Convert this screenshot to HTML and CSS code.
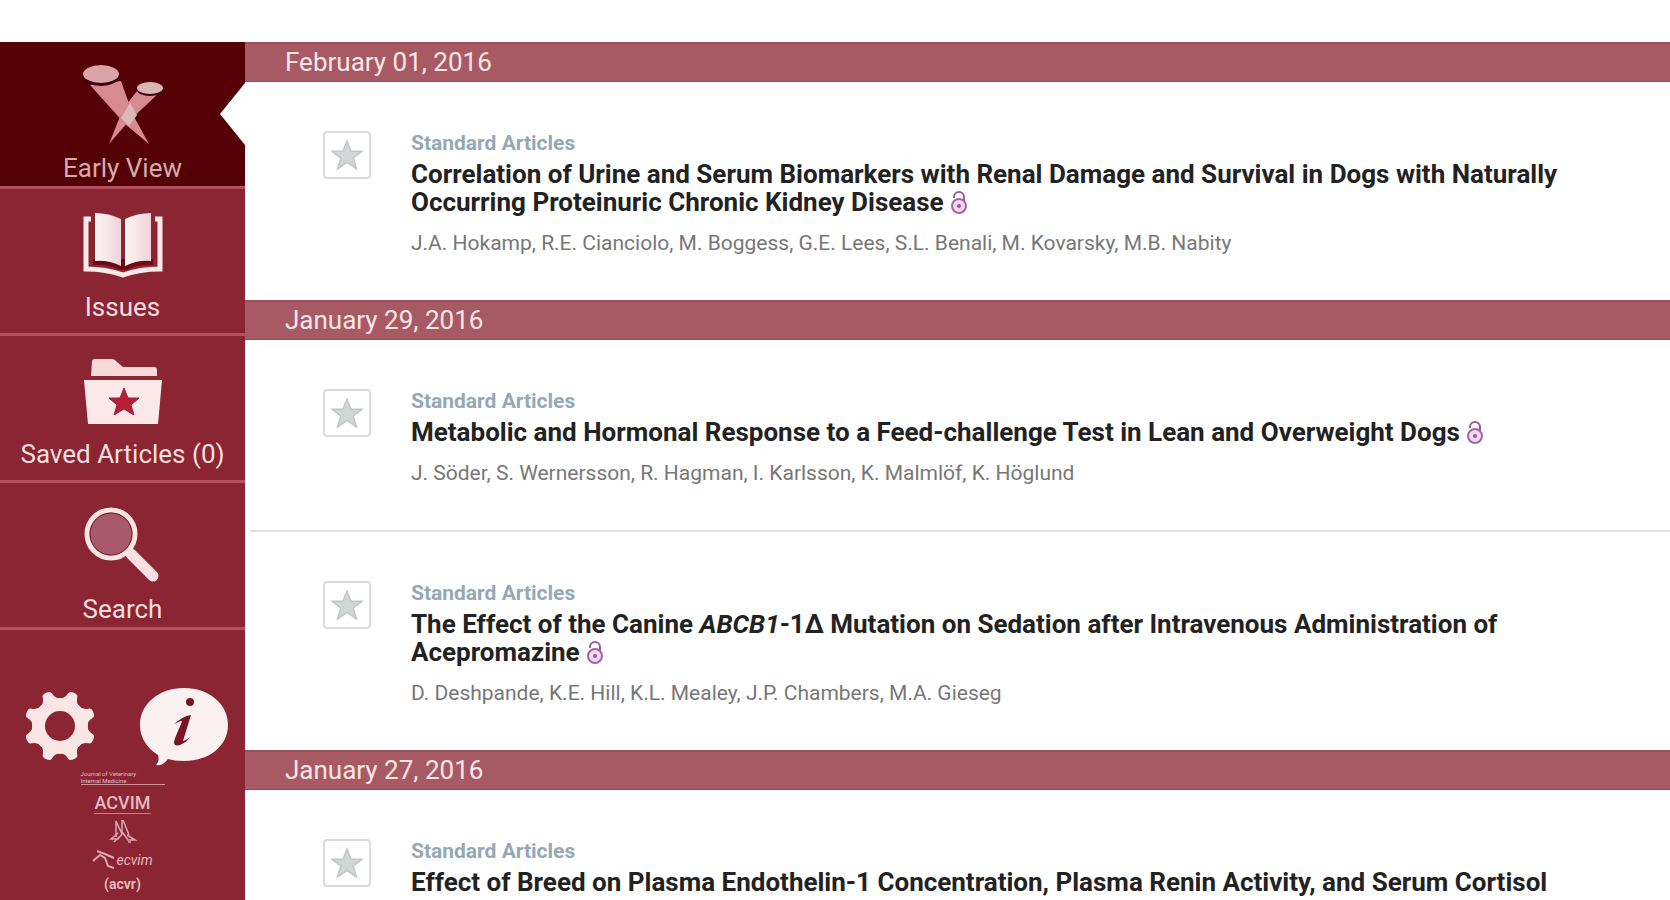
FILE: index.html
```html
<!DOCTYPE html>
<html lang="en">
<head>
  <meta charset="UTF-8">
  <meta name="viewport" content="width=device-width, initial-scale=1">
  <title>Early View</title>
  <link rel="stylesheet" href="styles.css">
</head>
<body>

  <!-- Shared icons -->
  <svg class="sprite" aria-hidden="true">
    <symbol id="star" viewBox="0 0 32 30">
      <path d="M16 1l4 10.200h11l-8.800 6.800 3.300 11-9.500-6.500L6.500 29l3.300-11L1 11.200h11z" fill="#d3d6d7" stroke="#c2c6c7" stroke-width="1.500"/>
    </symbol>
    <symbol id="open-access" viewBox="0 0 18 24">
      <path d="M4 7V6a5 5 0 0 1 10 0v8" fill="none" stroke="#9a5a9a" stroke-width="2"/>
      <circle cx="9" cy="15" r="7" fill="#f3d8f3" stroke="#a565a5" stroke-width="2"/>
      <circle cx="9" cy="15" r="2" fill="#9a5a9a"/>
    </symbol>
  </svg>

  <div class="app">
    <aside class="sidebar">
      <nav class="menu">
        <a href="#" class="menu-item active">
          <svg class="tall" viewBox="0 0 80 80">
            <path d="M7 20l35 39 24 20-16-29-12-34z" fill="#d98a90"/>
            <path d="M54 26l-14 18-14 35 19-22 31-29z" fill="#d98a90"/>
            <path d="M47 38l7 12-8 11-8-8z" fill="#dcb9b9"/>
            <ellipse cx="18" cy="12" rx="18" ry="9" fill="#35000a"/>
            <ellipse cx="67" cy="25" rx="13" ry="6" fill="#35000a"/>
            <ellipse cx="18" cy="9" rx="18" ry="9" fill="#dba5a8"/>
            <ellipse cx="67" cy="23" rx="13" ry="6" fill="#dbb5b3"/>
          </svg>
          <span>Early View</span>
        </a>
        <a href="#" class="menu-item">
          <svg viewBox="0 0 80 72">
            <defs>
              <linearGradient id="page">
                <stop offset="0" stop-color="#fff4f4"/>
                <stop offset="1" stop-color="#efd3d8"/>
              </linearGradient>
            </defs>
            <path d="M8 7H3v50q20 0 37 6 17-6 37-6V7h-5" fill="none" stroke="#fbe9e6" stroke-width="5"/>
            <path d="M10 53q15-1 27 5h6q12-6 27-5v-6H10z" fill="#6f0714"/>
            <path d="M12 1q14 0 26 6v47q-12-6-26-5z" fill="url(#page)"/>
            <path d="M68 1q-14 0-26 6v47q12-6 26-5z" fill="url(#page)"/>
          </svg>
          <span>Issues</span>
        </a>
        <a href="#" class="menu-item">
          <svg viewBox="0 0 80 72">
            <path d="M8 17L9 3q0-3 3-3h17q3 0 5 3l6 5h31q3 0 3 3v6z" fill="#f8d9da"/>
            <path d="M1 21h78l-4 44H5z" fill="#fbe8e9"/>
            <path d="M41 29l4 10h11l-8 7 3 10-10-6-10 6 3-10-8-7h11z" fill="#b81f36" stroke="#8b2a40"/>
          </svg>
          <span>Saved Articles (0)</span>
        </a>
        <a href="#" class="menu-item">
          <svg class="tall" viewBox="0 0 80 80">
            <path d="M48 48l22 22" stroke="#fbdfe1" stroke-width="11" stroke-linecap="round"/>
            <circle cx="28" cy="28" r="24" fill="#a9596c" stroke="#fbe6e0" stroke-width="5"/>
            <circle cx="28" cy="28" r="21" fill="none" stroke="#7b1a2b"/>
          </svg>
          <span>Search</span>
        </a>
      </nav>

      <div class="tools">
        <button class="settings" aria-label="Settings">
          <svg viewBox="-36 -36 72 72">
            <g fill="#fbe6e6" transform="rotate(22.500)">
              <circle r="28"/>
              <path id="cog" d="M-11-25q5-2 6-8 0-3 5-3t5 3q1 6 6 8z"/>
              <use href="#cog" transform="rotate(45)"/>
              <use href="#cog" transform="rotate(90)"/>
              <use href="#cog" transform="rotate(135)"/>
              <use href="#cog" transform="rotate(180)"/>
              <use href="#cog" transform="rotate(225)"/>
              <use href="#cog" transform="rotate(270)"/>
              <use href="#cog" transform="rotate(315)"/>
            </g>
            <circle r="15" fill="#8b2533"/>
          </svg>
        </button>
        <button class="info" aria-label="Information">
          <svg viewBox="0 0 90 80">
            <path d="M45 2c25 0 44 16 44 37S70 75 45 75c-7 0-12-1-16-2-4 5-8 7-12 6 3-3 3-7 2-10C8 62 1 52 1 39 1 18 20 2 45 2z" fill="#fbf1f1"/>
            <circle cx="51" cy="16" r="4" fill="#7b1524"/>
            <path d="M35 38c5-4 10-8 17-9l-8 26c4-1 6-3 8-5-4 7-16 13-17 7 0-5 6-15 8-22-3 0-5 2-8 3z" fill="#7b1524"/>
          </svg>
        </button>
      </div>

      <div class="sponsors">
        <p class="journal">Journal of Veterinary<br>Internal Medicine</p>
        <p class="acvim">ACVIM</p>
        <svg class="mark" viewBox="0 0 28 26">
          <path d="M7 19V3l6 13V2m1 0l6 15M9 15l-7 6h7l5-6 5 7h7l-8-5M5 24l5-5m9 5h3" fill="none" stroke="#dba8ae" stroke-width="1.500"/>
        </svg>
        <div class="ecvim">
          <svg viewBox="0 0 24 20">
            <path d="M1 11l7-6 5 3 3 8 6 2M5 1l8 3 9 4" fill="none" stroke="#dba8ae" stroke-width="2"/>
          </svg>
          <span>ecvim</span>
        </div>
        <p class="acvr">(acvr)</p>
      </div>
    </aside>

    <main class="list">
      <section>
        <h2>February 01, 2016</h2>
        <article>
          <button class="save" aria-label="Save article"><svg><use href="#star"/></svg></button>
          <div class="details">
            <p class="category">Standard Articles</p>
            <h3><a href="#">Correlation of Urine and Serum Biomarkers with Renal Damage and Survival in Dogs with Naturally Occurring Proteinuric Chronic Kidney Disease</a><svg><use href="#open-access"/></svg></h3>
            <p class="authors">J.A. Hokamp, R.E. Cianciolo, M. Boggess, G.E. Lees, S.L. Benali, M. Kovarsky, M.B. Nabity</p>
          </div>
        </article>
      </section>

      <section>
        <h2>January 29, 2016</h2>
        <article>
          <button class="save" aria-label="Save article"><svg><use href="#star"/></svg></button>
          <div class="details">
            <p class="category">Standard Articles</p>
            <h3><a href="#">Metabolic and Hormonal Response to a Feed-challenge Test in Lean and Overweight Dogs</a><svg><use href="#open-access"/></svg></h3>
            <p class="authors">J. Söder, S. Wernersson, R. Hagman, I. Karlsson, K. Malmlöf, K. Höglund</p>
          </div>
        </article>
        <hr>
        <article>
          <button class="save" aria-label="Save article"><svg><use href="#star"/></svg></button>
          <div class="details">
            <p class="category">Standard Articles</p>
            <h3><a href="#">The Effect of the Canine <em>ABCB1</em>-1Δ Mutation on Sedation after Intravenous Administration of Acepromazine</a><svg><use href="#open-access"/></svg></h3>
            <p class="authors">D. Deshpande, K.E. Hill, K.L. Mealey, J.P. Chambers, M.A. Gieseg</p>
          </div>
        </article>
      </section>

      <section>
        <h2>January 27, 2016</h2>
        <article>
          <button class="save" aria-label="Save article"><svg><use href="#star"/></svg></button>
          <div class="details">
            <p class="category">Standard Articles</p>
            <h3><a href="#">Effect of Breed on Plasma Endothelin-1 Concentration, Plasma Renin Activity, and Serum Cortisol</a></h3>
          </div>
        </article>
      </section>
    </main>
  </div>

</body>
</html>
```
FILE: styles.css
```css
* {
  box-sizing: border-box;
}

body {
  margin: 0;
  font-family: Roboto, sans-serif;
  background: #fff;
  overflow: hidden;
}

h2, h3, p {
  margin: 0;
}

a {
  color: inherit;
  text-decoration: none;
}

button {
  padding: 0;
  border: none;
  background: none;
  cursor: pointer;
}

.sprite {
  display: none;
}

.app {
  display: flex;
  height: 100vh;
  padding-top: 42px;
}

/* Sidebar */
.sidebar {
  flex: 0 0 245px;
  background: #8b2533;
}

.menu-item {
  display: flex;
  flex-direction: column;
  align-items: center;
  position: relative;
  height: 147px;
  padding-top: 23px;
  border-bottom: 3px solid #b44f5f;
  color: #f7dfdf;
  font-size: 26px;
  line-height: 46px;
}

.menu-item svg {
  flex: none;
  width: 80px;
  height: 72px;
}

.menu-item svg.tall {
  height: 80px;
}

.menu-item.active {
  background: #540006;
  color: #d3acab;
}

.menu-item.active::after {
  content: "";
  position: absolute;
  top: 41px;
  right: 0;
  border: 31px solid transparent;
  border-left: none;
  border-right: 25px solid #fff;
}

.tools {
  display: flex;
  justify-content: space-between;
  align-items: center;
  padding: 56px 16px 0 24px;
}

.tools svg {
  display: block;
}

.settings svg {
  width: 72px;
  height: 72px;
}

.info svg {
  width: 90px;
  height: 80px;
}

.sponsors {
  display: flex;
  flex-direction: column;
  align-items: center;
  color: #e5b9be;
}

.journal {
  width: 84px;
  padding-top: 4px;
  border-bottom: 1px solid #d3949c;
  font-size: 6px;
  line-height: 7px;
}

.acvim {
  margin-top: 8px;
  border-bottom: 1px solid #c98089;
  font-size: 18px;
  font-weight: 500;
  line-height: 20px;
}

.mark {
  width: 28px;
  height: 26px;
  margin-top: 4px;
}

.ecvim {
  display: flex;
  align-items: center;
  margin-top: 4px;
  font-size: 14px;
  font-style: italic;
  line-height: 24px;
}

.ecvim svg {
  width: 24px;
  height: 20px;
}

.acvr {
  font-size: 14px;
  font-weight: 700;
  line-height: 24px;
}

/* Article list */
.list {
  flex: 1;
  min-width: 0;
  overflow: hidden;
}

.list h2 {
  height: 40px;
  padding-left: 40px;
  background: #a75a64;
  border-top: 2px solid #9c4e5c;
  border-bottom: 1px solid #9c4755;
  color: #fae6e6;
  font-size: 26px;
  font-weight: 400;
  line-height: 37px;
}

article {
  display: flex;
  gap: 40px;
  padding: 46px 80px 45px 78px;
}

hr {
  height: 2px;
  margin: 0 0 0 5px;
  border: none;
  background: #dfe2e4;
}

.save {
  display: flex;
  flex: none;
  align-items: center;
  justify-content: center;
  width: 48px;
  height: 48px;
  margin-top: 3px;
  border: 2px solid #dcdcdc;
  border-radius: 4px;
}

.save svg {
  width: 32px;
  height: 30px;
}

.category {
  color: #94a9b5;
  font-size: 21px;
  font-weight: 700;
  line-height: 30px;
}

h3 {
  margin-top: 2px;
  color: #222;
  font-size: 26px;
  font-weight: 700;
  line-height: 28px;
}

h3 svg {
  width: 18px;
  height: 24px;
  margin-left: 6px;
  vertical-align: -4px;
}

.authors {
  margin-top: 15px;
  color: #777;
  font-size: 21px;
  line-height: 24px;
}
```
